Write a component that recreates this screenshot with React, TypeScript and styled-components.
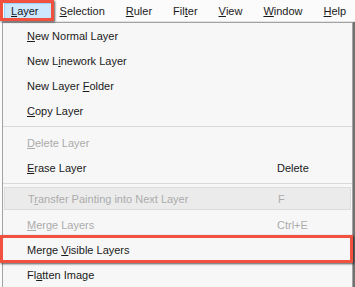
import React from "react";
import styled, { createGlobalStyle } from "styled-components";

const GlobalStyle = createGlobalStyle`
  body {
    margin: 0;
    background: #ffffff;
    font-family: "Liberation Sans", Arial, sans-serif;
  }
`;

const Screen = styled.div`
  position: relative;
  width: 355px;
  height: 287px;
  overflow: hidden;
  background: #fbfbfb;
  font-size: 11px;
  color: #1a1a1a;
`;

const MenuBar = styled.div`
  display: flex;
  align-items: center;
  height: 22px;
  padding-left: 4px;
  background: #fbfbfb;
  white-space: nowrap;
`;

const MenuTitle = styled.div<{ $active?: boolean }>`
  position: relative;
  display: flex;
  align-items: center;
  height: 14px;
  padding: 0 ${(p) => (p.$active ? 12 : 8)}px 0 6px;
  margin-right: ${(p) => (p.$active ? 1 : 5)}px;
  border: 1px solid ${(p) => (p.$active ? "#99d1ff" : "transparent")};
  background: ${(p) => (p.$active ? "#cce8ff" : "transparent")};
`;

const Key = styled.span`
  text-decoration: underline;
  text-underline-offset: 1px;
`;

const Callout = styled.div<{ $top: number; $left: number; $right: number; $bottom: number }>`
  position: absolute;
  top: ${(p) => p.$top}px;
  left: ${(p) => p.$left}px;
  right: ${(p) => p.$right}px;
  bottom: ${(p) => p.$bottom}px;
  border: 3px solid #f0523f;
  box-shadow: 1px 1px 2px rgba(0, 0, 0, 0.65);
  pointer-events: none;
`;

const Panel = styled.div`
  width: 349px;
  margin-left: 2px;
  border: 1px solid #a2a2a2;
  border-bottom: none;
  background: #f7f7f7;
  box-shadow: 2px 0 1px rgba(0, 0, 0, 0.55);
`;

const Item = styled.div<{ $disabled?: boolean; $hover?: boolean }>`
  position: relative;
  display: flex;
  align-items: center;
  height: ${(p) => (p.$hover ? 21 : 25)}px;
  margin: ${(p) => (p.$hover ? "2px 1px 2px 1px" : "0")};
  padding-left: ${(p) => (p.$hover ? 23 : 24)}px;
  color: ${(p) => (p.$disabled ? "#ababab" : "#1a1a1a")};
  background: ${(p) => (p.$hover ? "#ebebeb" : "transparent")};
  border: ${(p) => (p.$hover ? "1px solid #dcdcdc" : "none")};
  white-space: nowrap;
`;

const Label = styled.span`
  flex: 0 0 250px;
`;

const Shortcut = styled.span``;

const Separator = styled.div`
  height: 1px;
  margin: 3px 0;
  background: #d9d9d9;
`;

type Entry =
  | { sep: true }
  | {
      sep?: false;
      pre: string;
      key: string;
      post: string;
      shortcut?: string;
      disabled?: boolean;
      hover?: boolean;
      marked?: boolean;
    };

const entries: Entry[] = [
  { pre: "", key: "N", post: "ew Normal Layer" },
  { pre: "New L", key: "i", post: "nework Layer" },
  { pre: "New Layer ", key: "F", post: "older" },
  { pre: "", key: "C", post: "opy Layer" },
  { sep: true },
  { pre: "", key: "D", post: "elete Layer", disabled: true },
  { pre: "", key: "E", post: "rase Layer", shortcut: "Delete" },
  { sep: true },
  { pre: "T", key: "r", post: "ansfer Painting into Next Layer", shortcut: "F", disabled: true, hover: true },
  { pre: "", key: "M", post: "erge Layers", shortcut: "Ctrl+E", disabled: true },
  { pre: "Merge ", key: "V", post: "isible Layers", marked: true },
  { pre: "Fl", key: "a", post: "tten Image" },
];

const menus = [
  { pre: "", key: "L", post: "ayer" },
  { pre: "", key: "S", post: "election" },
  { pre: "", key: "R", post: "uler" },
  { pre: "Fil", key: "t", post: "er" },
  { pre: "", key: "V", post: "iew" },
  { pre: "", key: "W", post: "indow" },
  { pre: "", key: "H", post: "elp" },
];

export default function App() {
  return (
    <>
      <GlobalStyle />
      <Screen>
        <MenuBar>
          {menus.map((m, i) => (
            <MenuTitle key={i} $active={i === 0}>
              {m.pre}
              <Key>{m.key}</Key>
              {m.post}
              {i === 0 && <Callout $top={-4} $left={-5} $right={-3} $bottom={-3} />}
            </MenuTitle>
          ))}
        </MenuBar>
        <Panel>
          {entries.map((e, i) =>
            e.sep ? (
              <Separator key={i} />
            ) : (
              <Item key={i} $disabled={e.disabled} $hover={e.hover}>
                <Label>
                  {e.pre}
                  <Key>{e.key}</Key>
                  {e.post}
                </Label>
                {e.shortcut && <Shortcut>{e.shortcut}</Shortcut>}
                {e.marked && <Callout $top={-2} $left={-3} $right={-1} $bottom={-1} />}
              </Item>
            )
          )}
        </Panel>
      </Screen>
    </>
  );
}
